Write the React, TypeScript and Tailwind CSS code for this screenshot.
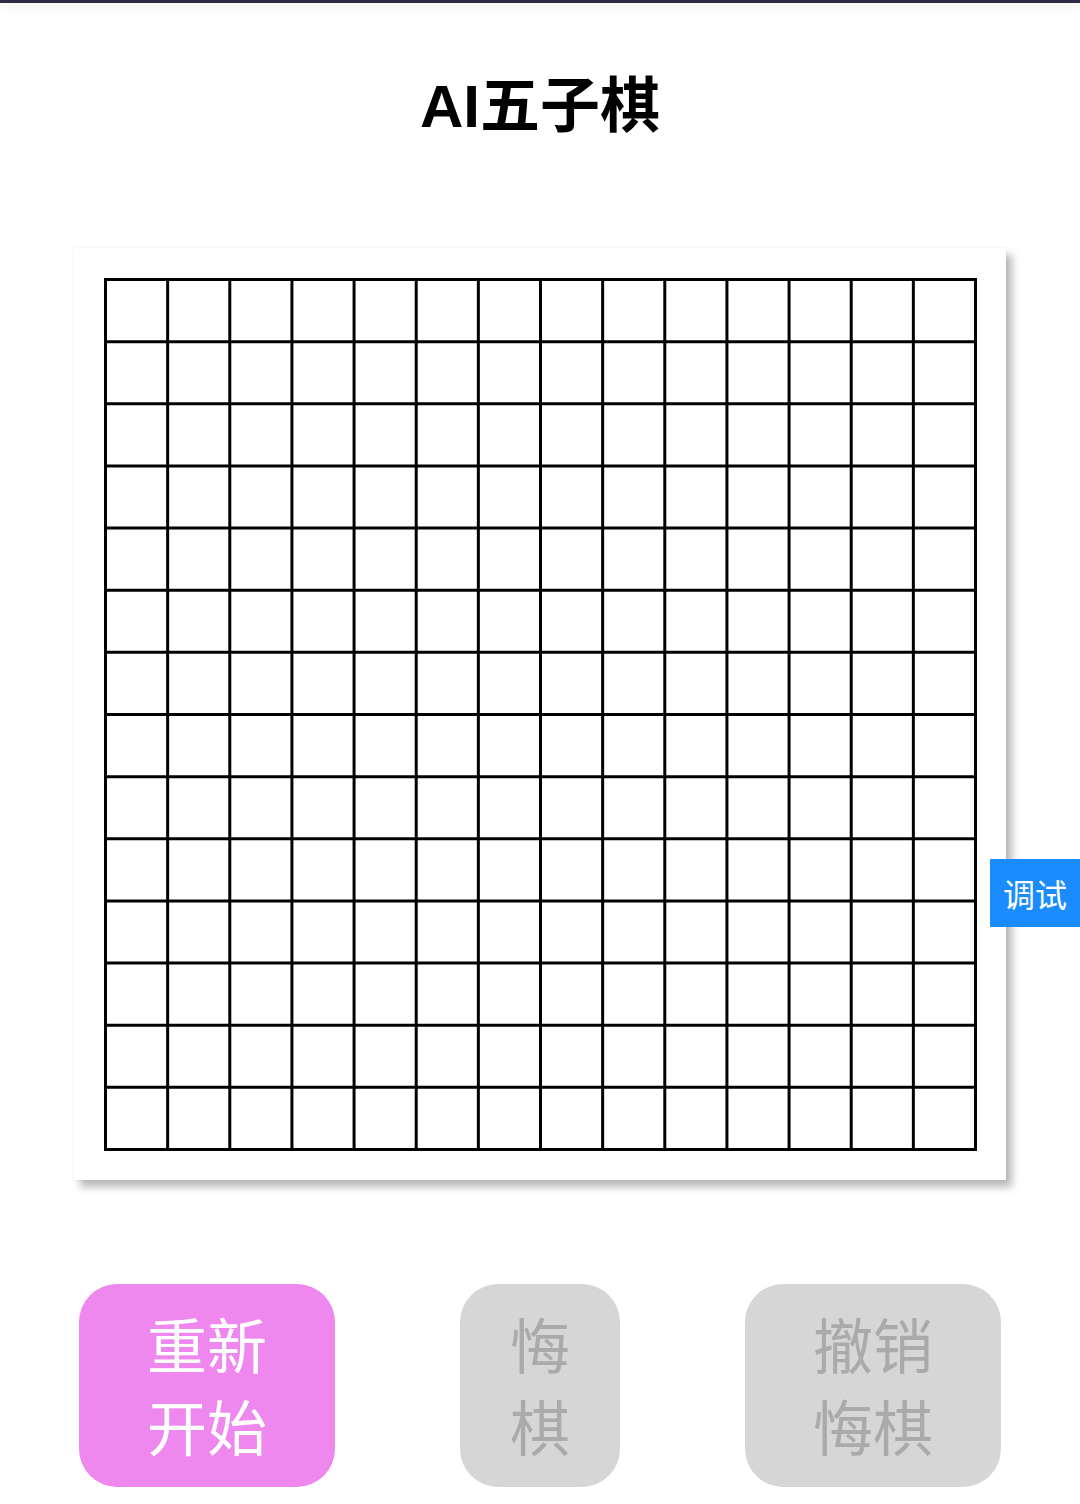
import React from 'react';

const SIZE = 15;
const CELL = 870 / (SIZE - 1);

function Board() {
  const lines = Array.from({ length: SIZE }, (_, i) => 1.5 + i * CELL);
  return (
    <svg width="873" height="873" viewBox="0 0 873 873" className="block">
      {lines.map((p, i) => (
        <g key={i}>
          <line x1={0} y1={p} x2={873} y2={p} stroke="#000" strokeWidth="3" />
          <line x1={p} y1={0} x2={p} y2={873} stroke="#000" strokeWidth="3" />
        </g>
      ))}
    </svg>
  );
}

function ActionButton({ lines, active, width }: { lines: string[]; active?: boolean; width: string }) {
  return (
    <button
      className={`${width} h-[203px] pb-[3px] rounded-[38px] flex flex-col items-center justify-center text-[60px] leading-[82px] ${
        active ? 'bg-[#ee88ee] text-white' : 'bg-[#d6d6d6] text-[#aaaaaa]'
      }`}
    >
      {lines.map((t, i) => (
        <span key={i}>{t}</span>
      ))}
    </button>
  );
}

export default function App() {
  return (
    <div className="relative w-[1080px] h-[1504px] bg-white overflow-hidden font-['Noto_Sans_CJK_SC',sans-serif]">
      <div className="h-[3px] bg-[#2b2b44] shadow-[0_2px_12px_rgba(0,0,0,0.15)]" />
      <h1 className="mt-[66px] text-center text-[60px] leading-[64px] font-bold text-black">
        <span className="font-['Liberation_Sans','Noto_Sans_CJK_SC',sans-serif]">AI</span>五子棋
      </h1>
      <div className="mt-[109px] mx-[74px] w-[932px] h-[932px] bg-white p-[30px] shadow-[0_0_3px_rgba(0,0,0,0.08),6px_7px_8px_rgba(0,0,0,0.28)]">
        <Board />
      </div>
      <div className="mt-[104px] px-[79px] flex justify-between">
        <ActionButton lines={['重新', '开始']} active width="w-[256px]" />
        <ActionButton lines={['悔', '棋']} width="w-[160px]" />
        <ActionButton lines={['撤销', '悔棋']} width="w-[256px]" />
      </div>
      <div className="absolute left-[990px] top-[859px] w-[90px] h-[68px] bg-[#1a8cff] text-white text-[32px] flex items-center justify-center">
        调试
      </div>
    </div>
  );
}
